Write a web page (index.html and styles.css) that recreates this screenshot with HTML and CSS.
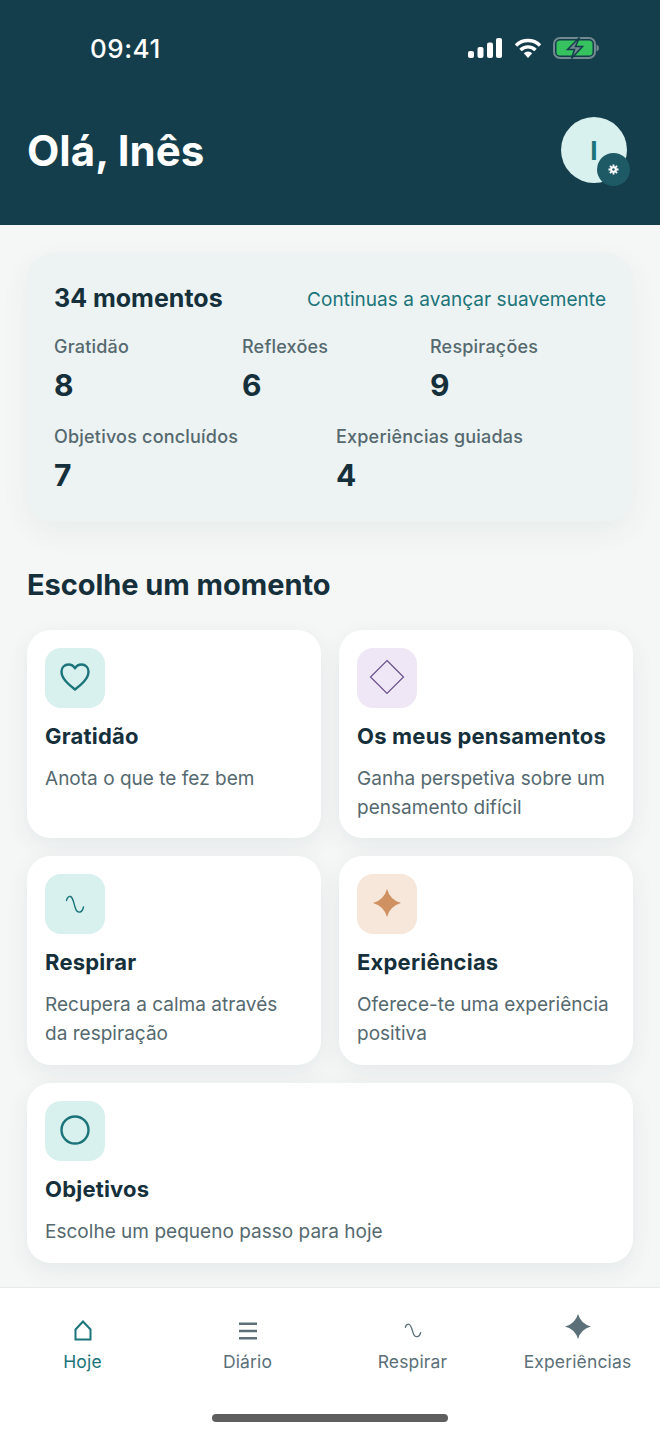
FILE: index.html
```html
<!DOCTYPE html>
<html lang="pt">
<head>
    <meta charset="UTF-8">
    <meta name="viewport" content="width=device-width, initial-scale=1.0">
    <title>Hoje</title>
    <link rel="stylesheet" href="styles.css">
</head>
<body>
    <header class="top">
        <div class="status">
            <span class="clock">09:41</span>
            <div class="status-icons">
                <svg width="34" height="21" viewBox="0 0 34 21"><rect x="0" y="13" width="6" height="7" rx="2" fill="#fff"/><rect x="9.500" y="9" width="6" height="11" rx="2" fill="#fff"/><rect x="19" y="4.500" width="6" height="15.500" rx="2" fill="#fff"/><rect x="28" y="0" width="6" height="20" rx="2" fill="#fff"/></svg>
                <svg width="28" height="21" viewBox="0 0 28 21"><path d="M2 7.500a17 17 0 0 1 24 0M6.500 12a10.500 10.500 0 0 1 15 0" fill="none" stroke="#fff" stroke-width="3.400"/><path d="M9.800 15.200a6 6 0 0 1 8.400 0L14 20z" fill="#fff"/></svg>
                <svg width="46" height="22" viewBox="0 0 46 22"><rect x="1" y="1" width="41" height="20" rx="6" fill="none" stroke="#71898f" stroke-width="2"/><path d="M43.500 7.500c1.500.5 2.500 2 2.500 3.500s-1 3-2.500 3.500z" fill="#71898f"/><rect x="3.500" y="3.500" width="36" height="15" rx="3.500" fill="#35c25f"/><path d="M26.500 .500 14.500 12.500h7L18.500 21.500l11-12h-7z" fill="#71898f" stroke="#143e4b" stroke-width="1.500"/></svg>
            </div>
        </div>
        <div class="greeting">
            <h1>Olá, Inês</h1>
            <div class="avatar">
                I
                <span class="settings">
                    <svg width="11" height="11" viewBox="0 0 12 12"><path d="M6 .5v11M.5 6h11M2.100 2.100l7.800 7.800M9.900 2.100l-7.800 7.800" stroke="#fff" stroke-width="2"/><circle cx="6" cy="6" r="3.500" fill="#fff"/><circle cx="6" cy="6" r="1.400" fill="#1d5a66"/></svg>
                </span>
            </div>
        </div>
    </header>

    <main class="content">
        <section class="summary">
            <div class="summary-head">
                <strong>34 momentos</strong>
                <span>Continuas a avançar suavemente</span>
            </div>
            <div class="stats stats-3">
                <div class="stat"><span>Gratidão</span><b>8</b></div>
                <div class="stat"><span>Reflexões</span><b>6</b></div>
                <div class="stat"><span>Respirações</span><b>9</b></div>
            </div>
            <div class="stats stats-2">
                <div class="stat"><span>Objetivos concluídos</span><b>7</b></div>
                <div class="stat"><span>Experiências guiadas</span><b>4</b></div>
            </div>
        </section>

        <h2>Escolhe um momento</h2>

        <div class="cards">
            <a class="card">
                <div class="icon teal">
                    <svg width="32" height="32" viewBox="0 1 32 32"><path d="M16 28.500C9 23 2.500 17.500 2.500 10.500 2.500 6.500 5.500 3.500 9.500 3.500c2.700 0 5 1.300 6.500 3.800 1.500-2.500 3.800-3.800 6.500-3.800 4 0 7 3 7 7 0 7-6.500 12.500-13.500 18z" fill="none" stroke="#1b7479" stroke-width="2.400" stroke-linejoin="round"/></svg>
                </div>
                <h3>Gratidão</h3>
                <p>Anota o que te fez bem</p>
            </a>
            <a class="card">
                <div class="icon lilac">
                    <svg width="36" height="36" viewBox="0 1 36 36"><path d="M18 1.500 34.500 18 18 34.500 1.500 18z" fill="none" stroke="#69508a" stroke-width="1.200"/></svg>
                </div>
                <h3>Os meus pensamentos</h3>
                <p>Ganha perspetiva sobre um pensamento difícil</p>
            </a>
            <a class="card">
                <div class="icon teal">
                    <svg width="20" height="20" viewBox="0 -1 20 20"><path d="M1.500 5.500C2 2.500 4 1 5.500 1.500 8 2.500 8.500 7 10 12c1 3.500 3 5.500 5 5 2-.5 3-2.500 3.500-5" fill="none" stroke="#1b7479" stroke-width="1.400" stroke-linecap="round"/></svg>
                </div>
                <h3>Respirar</h3>
                <p>Recupera a calma através da respiração</p>
            </a>
            <a class="card">
                <div class="icon peach">
                    <svg width="28" height="28" viewBox="0 1 28 28"><path d="M14 0Q17 11 28 14 17 17 14 28 11 17 0 14 11 11 14 0z" fill="#cf9161"/></svg>
                </div>
                <h3>Experiências</h3>
                <p>Oferece-te uma experiência positiva</p>
            </a>
            <a class="card wide">
                <div class="icon teal">
                    <svg width="30" height="30" viewBox="0 1 30 30"><circle cx="15" cy="15" r="13.500" fill="none" stroke="#1b7479" stroke-width="2.400"/></svg>
                </div>
                <h3>Objetivos</h3>
                <p>Escolhe um pequeno passo para hoje</p>
            </a>
        </div>
    </main>

    <nav class="tabs">
        <a class="tab active">
            <span class="tab-icon"><svg width="18" height="21" viewBox="0 0 18 21"><path d="M9 1.500 1.500 9.500v10h15v-10z" fill="none" stroke="#1b7479" stroke-width="2"/></svg></span>
            <span>Hoje</span>
        </a>
        <a class="tab">
            <span class="tab-icon"><svg width="18" height="18" viewBox="0 0 18 18"><path d="M0 1.700h18M0 9h18M0 16.300h18" stroke="#5b7078" stroke-width="2.400"/></svg></span>
            <span>Diário</span>
        </a>
        <a class="tab">
            <span class="tab-icon"><svg width="18" height="16" viewBox="0 0 20 20" preserveAspectRatio="none"><path d="M1.500 5.500C2 2.500 4 1 5.500 1.500 8 2.500 8.500 7 10 12c1 3.500 3 5.500 5 5 2-.5 3-2.500 3.500-5" fill="none" stroke="#5b7078" stroke-width="1.500" stroke-linecap="round"/></svg></span>
            <span>Respirar</span>
        </a>
        <a class="tab">
            <span class="tab-icon"><svg class="tab-star" width="26" height="25" viewBox="0 0 28 28" preserveAspectRatio="none"><path d="M14 0Q17 11 28 14 17 17 14 28 11 17 0 14 11 11 14 0z" fill="#5b7078"/></svg></span>
            <span>Experiências</span>
        </a>
        <div class="home-bar"></div>
    </nav>
</body>
</html>
```

FILE: styles.css
```css
* {
    box-sizing: border-box;
}
body {
    margin: 0;
    width: 660px;
    height: 1434px;
    display: flex;
    flex-direction: column;
    overflow: hidden;
    font-family: Inter, "Noto Sans", sans-serif;
    background-color: #f5f7f6;
    color: #15303b;
}
.top {
    height: 225px;
    flex: none;
    padding: 33px 27px 0;
    background-color: #143e4b;
    color: #fff;
}
.status {
    height: 30px;
    display: flex;
    justify-content: space-between;
    align-items: center;
    padding: 0 34px 0 63px;
}
.clock {
    font-size: 26px;
    font-weight: 500;
    letter-spacing: 0.5px;
}
.status-icons {
    display: flex;
    align-items: center;
    gap: 11.500px;
}
.greeting {
    margin-top: 54px;
    display: flex;
    justify-content: space-between;
    align-items: center;
}
.greeting h1 {
    margin: 0;
    font-size: 42px;
    font-weight: 700;
    letter-spacing: 0;
}
.avatar {
    position: relative;
    width: 66px;
    height: 66px;
    margin-right: 6px;
    border-radius: 50%;
    background-color: #d8f0ee;
    color: #1b7479;
    font-size: 26px;
    font-weight: 700;
    display: flex;
    align-items: center;
    justify-content: center;
}
.settings {
    position: absolute;
    right: -3px;
    bottom: -3px;
    width: 33px;
    height: 33px;
    border-radius: 50%;
    background-color: #1d5a66;
    display: flex;
    align-items: center;
    justify-content: center;
}
.content {
    flex: 1;
    padding: 28px 27px 0;
    min-height: 0;
}
.summary {
    height: 269px;
    padding: 28px 27px 0;
    border-radius: 27px;
    background-color: #edf3f2;
    box-shadow: 0 10px 30px rgba(20, 62, 75, 0.06);
}
.summary-head {
    display: flex;
    justify-content: space-between;
    align-items: center;
    height: 34px;
}
.summary-head strong {
    font-size: 25px;
    font-weight: 700;
}
.summary-head span {
    font-size: 19px;
    color: #1b7479;
    letter-spacing: 0.03px;
    padding-top: 3px;
}
.stats {
    display: grid;
    gap: 12px;
    margin-top: 21px;
}
.stats-3 {
    grid-template-columns: repeat(3, 1fr);
}
.stats-2 {
    grid-template-columns: repeat(2, 1fr);
    margin-top: 21px;
}
.stat span {
    display: block;
    font-size: 18px;
    font-weight: 500;
    line-height: 22px;
    color: #55696f;
    letter-spacing: 0.2px;
}
.stat b {
    display: block;
    margin-top: 7px;
    font-size: 30px;
    line-height: 40px;
    font-weight: 700;
}
.content h2 {
    margin: 45px 0 27px;
    font-size: 29px;
    line-height: 36px;
    font-weight: 700;
    letter-spacing: -0.05px;
}
.cards {
    display: grid;
    grid-template-columns: 1fr 1fr;
    grid-template-rows: 208px 209px 180px;
    gap: 18px;
}
.card {
    padding: 18px;
    border-radius: 24px;
    background-color: #fff;
    box-shadow: 0 8px 24px rgba(20, 62, 75, 0.07);
}
.wide {
    grid-column: 1 / 3;
}
.icon {
    width: 60px;
    height: 60px;
    border-radius: 16px;
    display: flex;
    align-items: center;
    justify-content: center;
}
.icon svg {
    overflow: visible;
}
.teal {
    background-color: #d8f0ee;
}
.lilac {
    background-color: #efe7f5;
}
.peach {
    background-color: #f6e7da;
}
.card h3 {
    margin: 13px 0 0;
    font-size: 22px;
    line-height: 30px;
    font-weight: 700;
    letter-spacing: 0.2px;
}
.card p {
    margin: 13px 0 0;
    font-size: 19px;
    line-height: 29px;
    color: #55696f;
    letter-spacing: 0.02px;
}
.tabs {
    position: relative;
    flex: none;
    height: 147px;
    display: grid;
    grid-template-columns: repeat(4, 1fr);
    background-color: #fff;
    border-top: 1px solid #e6eaea;
}
.tab {
    height: 91px;
    padding-top: 32px;
    display: flex;
    flex-direction: column;
    align-items: center;
    gap: 10px;
    font-size: 17.500px;
    line-height: 22px;
    letter-spacing: 0.15px;
    color: #5b7078;
}
.tab.active {
    color: #1b7479;
}
.tab-icon {
    height: 21px;
    display: flex;
    align-items: center;
    justify-content: center;
}
.tab-star {
    margin-top: -8px;
}
.home-bar {
    position: absolute;
    left: 212px;
    bottom: 12px;
    width: 236px;
    height: 8px;
    border-radius: 4px;
    background-color: #5f5f5f;
}
```
